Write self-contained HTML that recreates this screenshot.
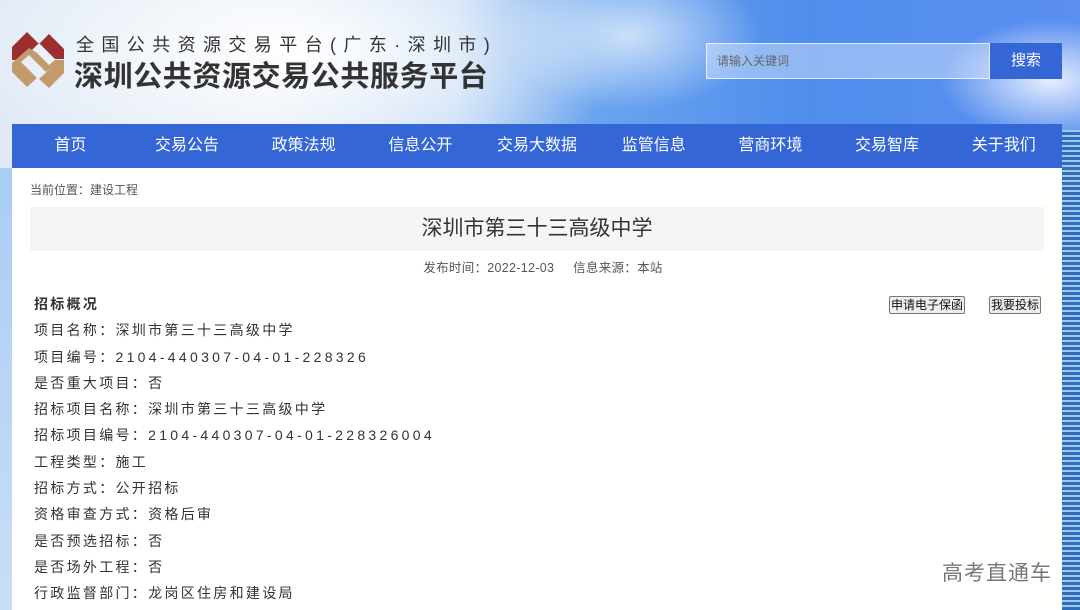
<!DOCTYPE html>
<html><head><meta charset="utf-8">
<style>
*{margin:0;padding:0;box-sizing:border-box}
body{width:1080px;height:610px;overflow:hidden;position:relative;font-family:"Liberation Sans","Noto Sans CJK SC",sans-serif;
background:linear-gradient(90deg,#dfe9f6 0%,#e8eef7 25%,#c6dbf5 42%,#6aa4ee 55%,#4f8ded 75%,#5b8ff0 100%);}
.cloud{position:absolute;border-radius:50%;background:radial-gradient(closest-side,rgba(255,255,255,.95),rgba(255,255,255,0));}
.left{position:absolute;left:0;top:168px;width:12px;height:442px;background:linear-gradient(#a9cdf4,#c9def5)}
.right{position:absolute;left:1062px;top:130px;width:18px;height:480px;background:repeating-linear-gradient(0deg,#2f6db8 0 3px,#9fc8ee 3px 5px);}
.nav{position:absolute;left:12px;top:124px;width:1050px;height:44px;background:#3466d6;display:flex;}
.nav div{flex:1;color:#fff;font-size:16px;text-align:center;line-height:44px}
.main{position:absolute;left:12px;top:168px;width:1050px;height:442px;background:#fff}
.t1{position:absolute;left:76px;top:31px;font-size:18px;letter-spacing:7.4px;color:#333;white-space:nowrap}
.t2{position:absolute;left:74px;top:53px;font-size:29px;font-weight:bold;color:#333;letter-spacing:0.6px;white-space:nowrap}
.search{position:absolute;left:706px;top:43px;width:284px;height:36px;background:rgba(225,236,252,.45);border:1px solid rgba(255,255,255,.7);font-size:12px;color:#666;line-height:34px;padding-left:10px}
.sbtn{position:absolute;left:990px;top:43px;width:72px;height:36px;background:#3466d6;color:#fff;font-size:15px;text-align:center;line-height:36px}
.crumb{position:absolute;left:18px;top:13px;font-size:12px;color:#555}
.title{position:absolute;left:18px;top:39px;width:1014px;height:44px;background:#f4f5f7;text-align:center;font-size:21px;color:#333;line-height:44px}
.meta{position:absolute;left:6px;width:1050px;top:89px;text-align:center;font-size:12.5px;color:#555;letter-spacing:0.3px}
.rows{position:absolute;left:22px;top:125px;font-size:14px;color:#333;letter-spacing:2.3px}
.rows div{height:26.3px;line-height:22px;white-space:nowrap}
.rows span{letter-spacing:3.3px}
.btn{position:absolute;top:128px;height:18px;border:1px solid #777;border-radius:2px;background:#efefef;font-size:12px;line-height:16px;padding:0 1px;color:#111}
.wm{position:absolute;left:942px;top:557px;font-size:21px;color:#777;letter-spacing:1px}
</style></head><body>
<div class="cloud" style="left:-60px;top:-80px;width:700px;height:260px"></div>
<div class="cloud" style="left:500px;top:-40px;width:260px;height:150px;opacity:.7"></div>
<div class="cloud" style="left:940px;top:20px;width:220px;height:120px;opacity:.9"></div>
<div class="left"></div>
<div class="right"></div>
<svg style="position:absolute;left:11px;top:30px" width="54" height="58" viewBox="0 0 54 58">
<polygon points="1,17 16,2 28,14 38,4 53,19 53,29 44,29 28,13 11,30 1,30" fill="#9c2f2d"/>
<polygon points="1,33 1,42 16,57 26,48 10,32 18,25 35,42 40,38 53,38 53,30 44,30 38,35 26,23 18,18" fill="#c39a6b"/>
<polygon points="28,49 38,58 53,43 53,38 40,38" fill="#c39a6b"/>
</svg>
<div class="t1">全国公共资源交易平台(广东·深圳市)</div>
<div class="t2">深圳公共资源交易公共服务平台</div>
<div class="search">请输入关键词</div>
<div class="sbtn">搜索</div>
<div class="nav"><div>首页</div><div>交易公告</div><div>政策法规</div><div>信息公开</div><div>交易大数据</div><div>监管信息</div><div>营商环境</div><div>交易智库</div><div>关于我们</div></div>
<div class="main">
<div class="crumb">当前位置：建设工程</div>
<div class="title">深圳市第三十三高级中学</div>
<div class="meta">发布时间：2022-12-03&nbsp;&nbsp;&nbsp;&nbsp;&nbsp;信息来源：本站</div>
<div class="btn" style="left:877px">申请电子保函</div>
<div class="btn" style="left:977px">我要投标</div>
<div class="rows">
<div style="font-weight:bold">招标概况</div>
<div>项目名称：深圳市第三十三高级中学</div>
<div>项目编号：<span>2104-440307-04-01-228326</span></div>
<div>是否重大项目：否</div>
<div>招标项目名称：深圳市第三十三高级中学</div>
<div>招标项目编号：<span>2104-440307-04-01-228326004</span></div>
<div>工程类型：施工</div>
<div>招标方式：公开招标</div>
<div>资格审查方式：资格后审</div>
<div>是否预选招标：否</div>
<div>是否场外工程：否</div>
<div>行政监督部门：龙岗区住房和建设局</div>
</div>
</div>
<div class="wm">高考直通车</div>
</body></html>
